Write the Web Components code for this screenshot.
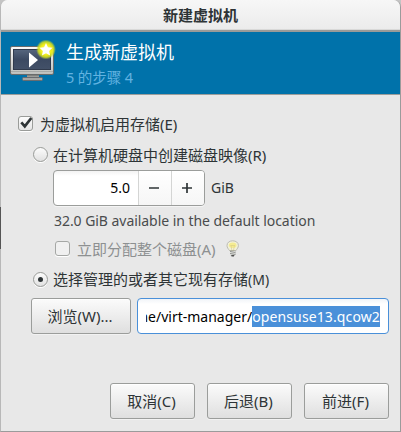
<!DOCTYPE html>
<html lang="zh-CN"><head><meta charset="utf-8"><title>新建虚拟机</title>
<style>
html,body{margin:0;width:401px;height:432px;overflow:hidden;background:#c4c4c4}
body{font:15px/20px "Noto Sans","Noto Sans CJK SC",sans-serif;color:#2e3436}
</style></head><body>
<vm-dialog></vm-dialog>
<script>
const define=(name,html)=>customElements.define(name,class extends HTMLElement{
  constructor(){super();
    const t=document.createElement('template');t.innerHTML=html;
    this.attachShadow({mode:'open'}).append(t.content.cloneNode(true));}
});

define('vm-titlebar',`<style>
:host{display:flex;justify-content:center;box-sizing:border-box;height:32px;padding-top:5px;border-bottom:2px solid #9a9b99;
background:linear-gradient(#f7f7f7,#ebebeb);box-shadow:inset 0 -1px #d9d9d8;font-weight:700;border-radius:7px 7px 0 0}
</style><slot></slot>`);

define('vm-monitor-icon',`<style>:host{display:block;width:48px;height:44px}svg{display:block}</style>
<svg width="48" height="44" viewBox="0 0 48 44">
<defs><linearGradient id="f" x2="0" y2="1"><stop stop-color="#fafafa"/><stop offset="1" stop-color="#bdbfbc"/></linearGradient>
<linearGradient id="s" x2="0" y2="1"><stop stop-color="#56667e"/><stop offset=".5" stop-color="#3c4a62"/><stop offset="1" stop-color="#435168"/></linearGradient>
<linearGradient id="b" x2="0" y2="1"><stop stop-color="#555753"/><stop offset="1" stop-color="#c5c7c4"/></linearGradient>
<radialGradient id="g"><stop stop-color="#fffb90"/><stop offset=".55" stop-color="#efed17"/><stop offset=".78" stop-color="#d3df20" stop-opacity=".85"/><stop offset="1" stop-color="#b2ce2f" stop-opacity="0"/></radialGradient></defs>
<path d="M17 34h12v4H17z" fill="url(#b)"/><rect x="12.5" y="37.500" width="20" height="3" rx="1" fill="#a5a7a4" stroke="#686c70"/>
<rect x=".5" y="6.500" width="43" height="28" rx="1.500" fill="url(#f)" stroke="#686b6b"/>
<path d="M1 31.500h42" stroke="#a7aaa7"/><rect x="3.500" y="9.500" width="37" height="20" fill="url(#s)" stroke="#303a4c"/>
<path d="M19 12.500v15L28 20z" fill="#fff"/><circle cx="36" cy="9.500" r="10" fill="url(#g)"/>
<path d="m36 3 1.900 4.200 4.600.5-3.400 3.200 1 4.600-4.100-2.300-4.100 2.300 1-4.600-3.400-3.200 4.600-.5z" fill="#fff"/></svg>`);

define('vm-banner',`<style>
:host{display:flex;box-sizing:border-box;height:63px;padding:8px 10px 0 9px;gap:8px;background:#0072aa;border-bottom:1px solid #9b9d9b;color:#fff}
.t{font-size:18px;line-height:24px}.s{font-size:14.500px;line-height:22px;margin-top:2px;color:#62b3e1;letter-spacing:-.1px}
</style><slot name="icon"></slot><div class="words"><div class="t"><slot name="title"></slot></div><div class="s"><slot></slot></div></div>`);

define('vm-check',`<style>
:host{display:flex;align-items:center;gap:7px;white-space:nowrap}
.box{position:relative;box-sizing:border-box;width:15px;height:15px;flex:none;border:1px solid #9a9c99;border-radius:3px;background:linear-gradient(#fcfcfc,#e5e5e5);box-shadow:0 1px #fff}
svg{position:absolute;left:-1px;top:-3px;display:none;overflow:visible}
:host([checked]) svg{display:block}
:host([disabled]){color:#8d9091}:host([disabled]) .box{background:#f0f0f0;border-color:#a5a7a5}
</style><span class="box"><svg width="17" height="17"><path d="m3.300 8.300 3.500 4L13.300 4" fill="none" stroke="#2e3436" stroke-width="2.700"/></svg></span><span><slot></slot></span>`);

define('vm-radio',`<style>
:host{display:flex;align-items:center;gap:5px;white-space:nowrap}
.dot{display:grid;place-items:center;box-sizing:border-box;width:15px;height:15px;flex:none;border:1px solid #999b98;border-radius:50%;background:linear-gradient(#fcfcfc,#e1e1e1);box-shadow:0 1px #fff}
:host([checked]) .dot::after{content:"";width:5px;height:5px;border-radius:50%;background:#2e3436}
</style><span class="dot"></span><span><slot></slot></span>`);

define('vm-button',`<style>
:host{display:flex;align-items:center;justify-content:center;box-sizing:border-box;width:85px;height:36px;padding-right:2px;border:1px solid #9b9d9b;border-radius:3px;background:linear-gradient(#fbfbfb,#dfdfdf);box-shadow:inset 0 1px #fff,0 1px #f2f2f2;white-space:nowrap}
:host([wide]){width:100px}
</style><span><slot></slot></span>`);

define('vm-spin',`<style>
:host{display:grid;grid-template-columns:1fr 33px 33px;box-sizing:border-box;width:152px;height:36px;border:1px solid #9b9d9b;border-radius:4px;background:linear-gradient(#f3f3f3,#fff 5px);box-shadow:0 1px #f5f5f5;color:#000;overflow:hidden}
.n{text-align:right;padding-right:8px;line-height:34px;font-size:14px}
.b{display:grid;place-items:center;border-left:1px solid #d4d5d4;background:linear-gradient(#fff,#f6f6f6)}
svg{position:relative;left:-1px}
</style><span class="n"><slot></slot></span>
<span class="b"><svg width="12" height="12"><path d="M1 6h10" stroke="#2e3436" stroke-width="1.700"/></svg></span>
<span class="b"><svg width="12" height="12"><path d="M1 6h10M6 1v10" stroke="#2e3436" stroke-width="1.700"/></svg></span>`);

define('vm-entry',`<style>
:host{display:flex;justify-content:flex-end;align-items:center;box-sizing:border-box;width:252px;height:36px;padding:0 8px;border:1px solid #4a90d9;border-radius:4px;background:linear-gradient(#f1f4f8,#fff 5px);color:#000}
.clip{display:flex;justify-content:flex-end;overflow:hidden;width:235px;white-space:nowrap;line-height:21px;font-size:14px}
.sel{background:#4a90d9;color:#fff;letter-spacing:.12px}
</style><div class="clip"><span><slot></slot></span><span class="sel"><slot name="selected"></slot></span></div>`);

define('vm-bulb',`<style>:host{display:block}svg{display:block}</style>
<svg width="14" height="17" viewBox="0 0 14 17"><path d="M4 11C2 8.800 1 7.500 1 5.500 1 2.500 3.500.8 6.700.8s5.700 1.700 5.700 4.700c0 2-1.100 3.300-3 5.500z" fill="#f2f0d8" stroke="#bcbcb4"/>
<ellipse cx="6.700" cy="5.300" rx="3.800" ry="2.700" fill="#f5ec91"/><path d="M5 5.500 6 11M8.400 5.500l-1 5.500M4.500 5.500h4.400" stroke="#d6cb84" stroke-width=".6" fill="none"/>
<path d="M4 10.500h5.500v4L8 16H5.500L4 14.500z" fill="#8e908c"/><path d="m4 12.500 5.500-1M4 14.500l5.500-1" stroke="#e4e5e2"/><path d="M5.500 15.800h2.500" stroke="#444" stroke-width="1.300"/></svg>`);

define('vm-dialog',`<style>
:host{display:flex;flex-direction:column;box-sizing:border-box;width:401px;height:432px;border:solid #9b9b9b;border-width:0 1px 1px;border-left-color:#b8b8b8;border-radius:7px 7px 0 0;background:#e8e8e8;position:relative}
:host::before{content:"";position:absolute;left:-1px;top:207px;width:1px;height:42px;background:#555}
main{display:flex;flex-direction:column;padding-left:17px}
.row{display:flex;align-items:center}
.k{font-size:14px}
.r1{height:29px;margin-top:14px}.r2{height:33px;padding-left:15px}
.r3{margin-top:-1px;padding-left:35px;gap:6px}
.r4{height:28px;padding-left:36px;box-sizing:border-box;font-size:14px;color:#4a4c4d;margin-top:1px;letter-spacing:-.05px}
.r5{height:27px;padding-left:37px;gap:10px}
.r6{height:33px;margin-top:1px;padding-left:15px}
.r7{padding:2px 0 0 13px;gap:6px}
footer{display:flex;justify-content:flex-end;gap:12px;padding:49px 11px 0 0}
</style>
<vm-titlebar>新建虚拟机</vm-titlebar>
<vm-banner><vm-monitor-icon slot="icon"></vm-monitor-icon><span slot="title">生成新虚拟机</span>5 的步骤 4</vm-banner>
<main>
<div class="row r1"><vm-check checked>为虚拟机启用存储(E)</vm-check></div>
<div class="row r2"><vm-radio>在计算机硬盘中创建磁盘映像(R)</vm-radio></div>
<div class="row r3"><vm-spin>5.0</vm-spin><span class="k">GiB</span></div>
<div class="row r4">32.0 GiB available in the default location</div>
<div class="row r5"><vm-check disabled>立即分配整个磁盘(A)</vm-check><vm-bulb></vm-bulb></div>
<div class="row r6"><vm-radio checked>选择管理的或者其它现有存储<span class="k">(M)</span></vm-radio></div>
<div class="row r7"><vm-button wide>浏览(W)...</vm-button><vm-entry>/home/virt-manager/<span slot="selected">opensuse13.qcow2</span></vm-entry></div>
</main>
<footer><vm-button>取消(C)</vm-button><vm-button>后退(B)</vm-button><vm-button>前进(F)</vm-button></footer>`);
</script></body></html>
